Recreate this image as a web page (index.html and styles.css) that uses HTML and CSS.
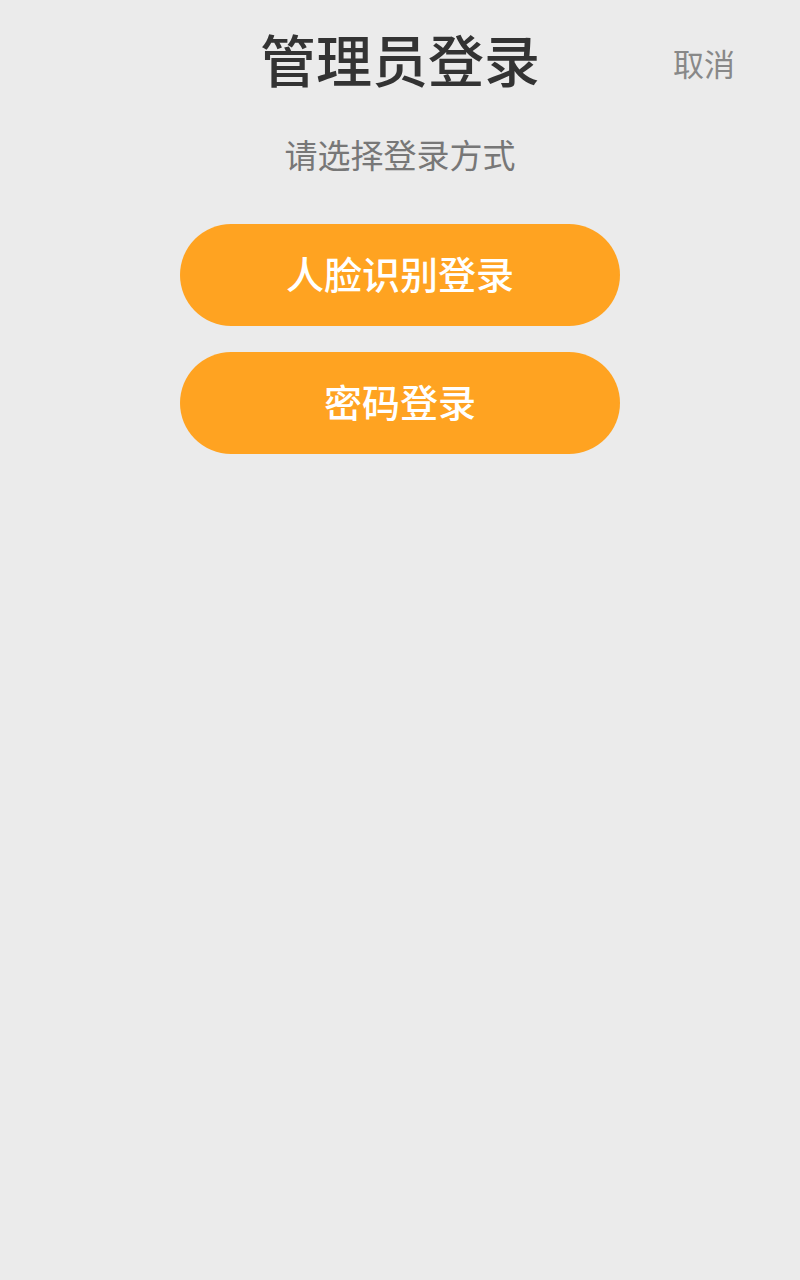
FILE: index.html
```html
<!doctype html>
<html lang="zh-CN">
<head>
<meta charset="utf-8">
<title>管理员登录</title>
<meta name="viewport" content="width=device-width, initial-scale=1">
<link rel="stylesheet" href="styles.css">
</head>
<body>

<header class="top">
  <span></span>
  <h1>管理员登录</h1>
  <a class="cancel" href="#">取消</a>
</header>

<p class="subtitle">请选择登录方式</p>

<div class="options">
  <button class="btn" type="button">人脸识别登录</button>
  <button class="btn" type="button">密码登录</button>
</div>

</body>
</html>
```

FILE: styles.css
```css
body {
  margin: 0;
  min-height: 100vh;
  background: #ebebeb;
  font-family: "Noto Sans CJK SC", "Noto Sans", sans-serif;
}
.top {
  display: grid;
  grid-template-columns: 1fr auto 1fr;
  align-items: center;
  padding-top: 26px;
}
.top h1 {
  margin: 0;
  font-size: 56px;
  line-height: 64px;
  font-weight: 500;
  color: #333;
}
.cancel {
  justify-self: end;
  margin-right: 65px;
  margin-top: 9px;
  font-size: 31px;
  line-height: 40px;
  color: #888;
  text-decoration: none;
}
.subtitle {
  margin: 44px 0 0;
  text-align: center;
  font-size: 33px;
  line-height: 40px;
  color: #777;
}
.options {
  display: flex;
  flex-direction: column;
  align-items: center;
  gap: 26px;
  margin-top: 50px;
}
.btn {
  width: 440px;
  height: 102px;
  padding: 0 0 6px;
  border: 0;
  border-radius: 51px;
  background: #ffa321;
  color: #fff;
  font-family: inherit;
  font-size: 38px;
  font-weight: 500;
  cursor: pointer;
}
```
